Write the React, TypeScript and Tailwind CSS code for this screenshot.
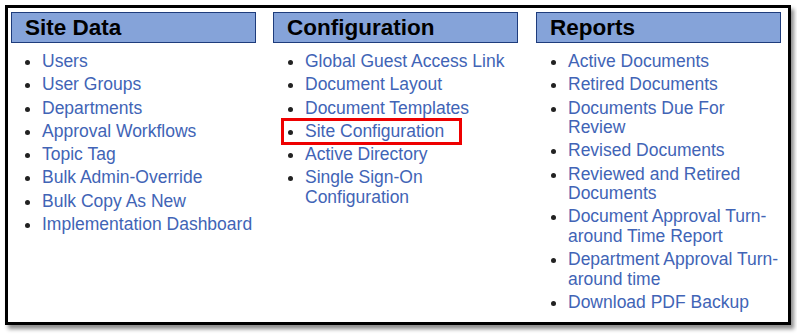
const columns: { title: string; items: string[]; ml: string; pl: string }[] = [
  {
    title: 'Site Data',
    ml: 'ml-0',
    pl: 'pl-[31px]',
    items: [
      'Users',
      'User Groups',
      'Departments',
      'Approval Workflows',
      'Topic Tag',
      'Bulk Admin-Override',
      'Bulk Copy As New',
      'Implementation Dashboard',
    ],
  },
  {
    title: 'Configuration',
    ml: 'ml-[17px]',
    pl: 'pl-[32px]',
    items: [
      'Global Guest Access Link',
      'Document Layout',
      'Document Templates',
      'Site Configuration',
      'Active Directory',
      'Single Sign-On Configuration',
    ],
  },
  {
    title: 'Reports',
    ml: 'ml-[18px]',
    pl: 'pl-[32px]',
    items: [
      'Active Documents',
      'Retired Documents',
      'Documents Due For Review',
      'Revised Documents',
      'Reviewed and Retired Documents',
      'Document Approval Turn-around Time Report',
      'Department Approval Turn-around time',
      'Download PDF Backup',
    ],
  },
];

export default function App() {
  return (
    <div className="h-[334px] w-[797px] bg-white pl-[5px] pt-[5px] font-['Liberation_Sans',Arial,sans-serif]">
      <div className="flex h-[320px] w-[786px] border-[3px] border-black bg-white pl-[3px] pt-[4px] shadow-[3px_4px_4px_rgba(0,0,0,0.45)]">
        {columns.map((col) => (
          <div key={col.title} className={`w-[245px] shrink-0 ${col.ml}`}>
            <div className="flex h-[31px] items-center border border-[#1e3c7c] bg-[#85a3d9] pl-[13px] text-[22.5px] font-bold text-black">
              {col.title}
            </div>
            <ul className={`mt-[9px] list-disc ${col.pl} pr-[1px] text-[17.5px] leading-[19.5px] text-[#4164b6] marker:text-[#222]`}>
              {col.items.map((item) => (
                <li key={item} className="mb-[3.8px]">
                  {item === 'Site Configuration' ? (
                    <span className="-ml-[24px] -my-[4px] inline-block border-[3px] border-[#ee0000] py-[1px] pl-[21px] pr-[15px]">
                      {item}
                    </span>
                  ) : (
                    item
                  )}
                </li>
              ))}
            </ul>
          </div>
        ))}
      </div>
    </div>
  );
}
